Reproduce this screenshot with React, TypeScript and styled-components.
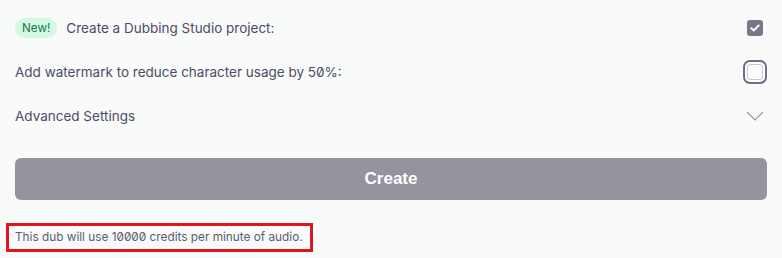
import React from "react";
import styled, { createGlobalStyle } from "styled-components";

const GlobalStyle = createGlobalStyle`
  html, body { margin: 0; padding: 0; background: #f9fafa; }
  body {
    font-family: Inter, "Noto Sans", sans-serif;
    font-feature-settings: "zero" 1;
    -webkit-font-smoothing: antialiased;
  }
`;

const Panel = styled.div`
  padding: 6px 15px 0 15px;
  display: flex;
  flex-direction: column;
`;

const Row = styled.div`
  height: 44px;
  display: flex;
  align-items: center;
  justify-content: space-between;
`;

const Label = styled.div`
  display: flex;
  align-items: center;
  gap: 9px;
  font-size: 13.5px;
  color: #4d4c64;
`;

const Badge = styled.span`
  display: inline-flex;
  align-items: center;
  height: 20px;
  padding: 0 7px;
  border-radius: 10px;
  background: #d3f8e3;
  color: #137a4f;
  font-size: 11.7px;
`;

const Box = styled.span<{ $checked?: boolean; $focused?: boolean }>`
  box-sizing: border-box;
  width: 16px;
  height: 16px;
  border-radius: 3px;
  display: inline-flex;
  align-items: center;
  justify-content: center;
  margin-right: 4px;
  background: ${(p) => (p.$checked ? "#787788" : "#fbfbfc")};
  border: ${(p) => (p.$checked ? "none" : "1px solid #c9c8d2")};
  box-shadow: ${(p) =>
    p.$focused ? "0 0 0 2px #ffffff, 0 0 0 4px #6f6e82" : "none"};
`;

const Chevron = styled.svg`
  width: 18px;
  height: 10px;
  margin-right: 3px;
`;

const CreateButton = styled.button`
  margin-top: 20px;
  height: 42px;
  width: 100%;
  border: none;
  border-radius: 6px;
  background: #95939e;
  color: #ffffff;
  font-family: "Liberation Sans", Arial, sans-serif;
  font-weight: 700;
  font-size: 17px;
`;

const Note = styled.div`
  margin-top: 23px;
  margin-left: -9px;
  align-self: flex-start;
  border: 3px solid #e3141d;
  padding: 0 7px 0 6px;
  height: 23px;
  line-height: 23px;
  font-size: 11.8px;
  color: #5c5b70;
`;

export default function App() {
  return (
    <>
      <GlobalStyle />
      <Panel>
        <Row>
          <Label>
            <Badge>New!</Badge>
            Create a Dubbing Studio project:
          </Label>
          <Box $checked>
            <svg width="10" height="8" viewBox="0 0 10 8">
              <path
                d="M1.3 4.2 L3.8 6.5 L8.7 1.4"
                fill="none"
                stroke="#ffffff"
                strokeWidth="1.9"
                strokeLinecap="round"
                strokeLinejoin="round"
              />
            </svg>
          </Box>
        </Row>
        <Row>
          <Label>Add watermark to reduce character usage by 50%:</Label>
          <Box $focused />
        </Row>
        <Row>
          <Label>Advanced Settings</Label>
          <Chevron viewBox="0 0 18 10">
            <path d="M1 1 L9 9 L17 1" fill="none" stroke="#9b9aa6" strokeWidth="1.2" />
          </Chevron>
        </Row>
        <CreateButton>Create</CreateButton>
        <Note>This dub will use 10000 credits per minute of audio.</Note>
      </Panel>
    </>
  );
}
